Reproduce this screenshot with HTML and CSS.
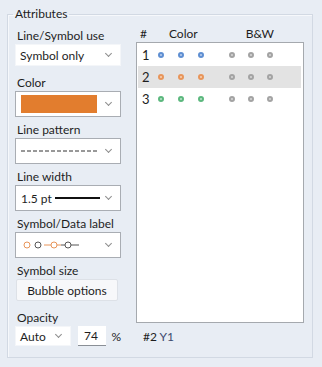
FILE: index.html
```html
<!DOCTYPE html>
<html lang="en">
<head>
    <meta charset="UTF-8">
    <title>Attributes</title>
    <link rel="stylesheet" href="styles.css">
</head>
<body>
    <fieldset class="attributes">
        <legend>Attributes</legend>
        <div class="columns">
            <div class="left">
                <div class="field">
                    <label>Line/Symbol use</label>
                    <div class="combo flat"><span>Symbol only</span><i class="chev"></i></div>
                </div>
                <div class="field">
                    <label>Color</label>
                    <div class="combo"><span class="swatch"></span><i class="chev"></i></div>
                </div>
                <div class="field">
                    <label>Line pattern</label>
                    <div class="combo">
                        <svg width="78" height="4" viewBox="0 0 78 4"><line x1="0" y1="2" x2="78" y2="2" stroke="#333" stroke-width="1" stroke-dasharray="4 2"/></svg>
                        <i class="chev"></i>
                    </div>
                </div>
                <div class="field">
                    <label>Line width</label>
                    <div class="combo">
                        <span class="pt">1.5 pt</span><span class="thick"></span>
                        <i class="chev"></i>
                    </div>
                </div>
                <div class="field">
                    <label>Symbol/Data label</label>
                    <div class="combo">
                        <svg width="64" height="10" viewBox="0 0 64 10">
                            <circle cx="6" cy="5" r="3" fill="none" stroke="#e8955a" stroke-width="1"/>
                            <circle cx="17" cy="5" r="3" fill="none" stroke="#555" stroke-width="1"/>
                            <line x1="23" y1="5" x2="30" y2="5" stroke="#e8955a" stroke-width="1"/>
                            <circle cx="33" cy="5" r="3" fill="none" stroke="#e8955a" stroke-width="1"/>
                            <line x1="36" y1="5" x2="40" y2="5" stroke="#e8955a" stroke-width="1"/>
                            <line x1="40" y1="5" x2="44" y2="5" stroke="#555" stroke-width="1"/>
                            <circle cx="47" cy="5" r="3" fill="none" stroke="#555" stroke-width="1"/>
                            <line x1="50" y1="5" x2="58" y2="5" stroke="#555" stroke-width="1"/>
                        </svg>
                        <i class="chev"></i>
                    </div>
                </div>
                <div class="field">
                    <label>Symbol size</label>
                    <button class="bubble">Bubble options</button>
                </div>
                <div class="field">
                    <label>Opacity</label>
                    <div class="opacity-row">
                        <div class="combo flat auto"><span>Auto</span><i class="chev"></i></div>
                        <span class="num-input">74</span>
                        <span class="pct">%</span>
                    </div>
                </div>
            </div>
            <div class="right">
                <div class="list-head">
                    <span class="h-num">#</span>
                    <span class="h-color">Color</span>
                    <span class="h-bw">B&amp;W</span>
                </div>
                <div class="series-list">
                    <div class="series">
                        <span class="idx">1</span>
                        <i class="dot blue"></i><i class="dot blue"></i><i class="dot blue gap-bw"></i>
                        <i class="dot gray"></i><i class="dot gray"></i><i class="dot gray"></i>
                    </div>
                    <div class="series selected">
                        <span class="idx">2</span>
                        <i class="dot orange"></i><i class="dot orange"></i><i class="dot orange gap-bw"></i>
                        <i class="dot gray"></i><i class="dot gray"></i><i class="dot gray"></i>
                    </div>
                    <div class="series">
                        <span class="idx">3</span>
                        <i class="dot green"></i><i class="dot green"></i><i class="dot green gap-bw"></i>
                        <i class="dot gray"></i><i class="dot gray"></i><i class="dot gray"></i>
                    </div>
                </div>
                <div class="status">#2 <span class="axis">Y1</span></div>
            </div>
        </div>
    </fieldset>
</body>
</html>
```

FILE: styles.css
```css
body {
    margin: 0;
    padding: 6px 0 0 7px;
    background: #e8edf4;
    font-family: 'Lato', sans-serif;
    font-size: 12px;
    color: #1e1e1e;
}

.attributes {
    box-sizing: border-box;
    width: 306px;
    height: 352px;
    margin: 0;
    padding: 6px 7px 0 7px;
    border: 1px solid #d2d9e3;
    box-shadow: inset 1px 1px 0 #f6f8fb;
}

.attributes legend {
    padding: 0 2px;
    margin-left: -2px;
    line-height: 16px;
}

.columns {
    display: flex;
    gap: 15px;
}

.left {
    width: 106px;
}

.field {
    height: 47px;
}

.field label {
    display: block;
    height: 16px;
    line-height: 16px;
    padding-left: 2px;
}

.combo {
    box-sizing: border-box;
    display: flex;
    align-items: center;
    height: 26px;
    padding: 0 0 0 5px;
    background: white;
    border: 1px solid #a9adb3;
    position: relative;
}

.combo.flat {
    height: 22px;
    border-color: #f4f6f9;
    padding-left: 4px;
}

.chev {
    position: absolute;
    right: 9px;
    top: 50%;
    width: 4px;
    height: 4px;
    margin-top: -4px;
    border-right: 1px solid #8c8c8c;
    border-bottom: 1px solid #8c8c8c;
    transform: rotate(45deg);
}

.swatch {
    width: 76px;
    height: 18px;
    background: #e27d2e;
}

.pt {
    margin-right: 3px;
}

.thick {
    width: 45px;
    height: 2px;
    background: #111;
}

.bubble {
    box-sizing: border-box;
    width: 102px;
    height: 22px;
    margin-left: 1px;
    padding: 0;
    background: #f7f8fa;
    border: 1px solid #dde1e7;
    border-radius: 2px;
    font-family: 'Lato', sans-serif;
    font-size: 12px;
    color: #1e1e1e;
}

.opacity-row {
    display: flex;
    align-items: center;
}

.combo.auto {
    width: 60px;
    height: 20px;
}

.num-input {
    box-sizing: border-box;
    width: 30px;
    height: 20px;
    margin-left: 7px;
    padding-left: 6px;
    line-height: 19px;
    background: white;
    border-bottom: 1px solid #8a8f96;
}

.pct {
    margin-left: 5px;
}

.right {
    width: 168px;
}

.list-head {
    height: 16px;
    margin-top: -2px;
    line-height: 16px;
    display: flex;
}

.h-num {
    margin-left: 4px;
}

.h-color {
    margin-left: 22px;
}

.h-bw {
    margin-left: 48px;
}

.series-list {
    box-sizing: border-box;
    height: 281px;
    padding: 1px 2px 0 1px;
    background: white;
    border: 1px solid #a5a9ae;
}

.series {
    display: flex;
    align-items: center;
    height: 22px;
    padding-left: 4px;
    font-size: 13px;
}

.series.selected {
    background: #e3e3e3;
}

.idx {
    width: 16px;
}

.dot {
    box-sizing: border-box;
    width: 6px;
    height: 6px;
    margin-right: 14px;
    border-radius: 50%;
    border: 2px solid;
}

.dot.gap-bw {
    margin-right: 25px;
}

.dot.gray {
    margin-right: 13px;
    border-color: #a3a3a3;
    background: #d8d8d8;
}

.dot.blue {
    border-color: #5f8fd2;
    background: #bcd0ee;
}

.dot.orange {
    border-color: #e8955a;
    background: #f6d2b6;
}

.dot.green {
    border-color: #5cb87e;
    background: #bde4ca;
}

.status {
    margin-top: 6px;
    padding-left: 7px;
    line-height: 16px;
}

.axis {
    color: #3c4a6e;
}
```
